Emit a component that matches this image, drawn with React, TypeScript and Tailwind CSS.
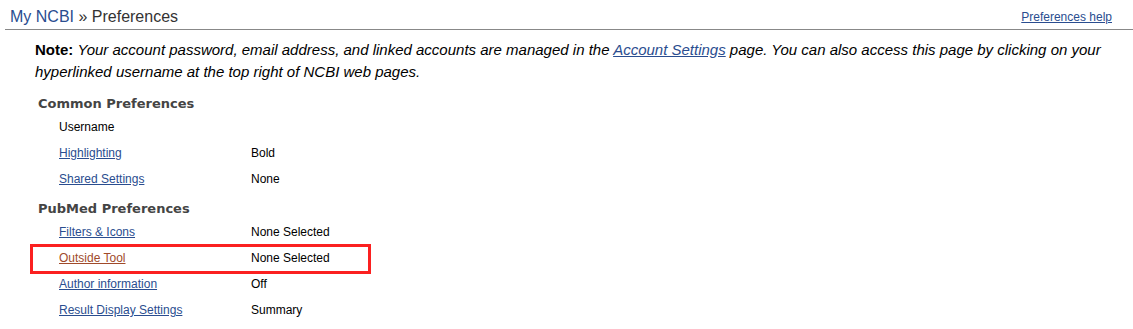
import React from 'react';

type Row = { label: string; value?: string; link?: boolean; highlight?: boolean };

const common: Row[] = [
  { label: 'Username' },
  { label: 'Highlighting', value: 'Bold', link: true },
  { label: 'Shared Settings', value: 'None', link: true },
];

const pubmed: Row[] = [
  { label: 'Filters & Icons', value: 'None Selected', link: true },
  { label: 'Outside Tool', value: 'None Selected', link: true, highlight: true },
  { label: 'Author information', value: 'Off', link: true },
  { label: 'Result Display Settings', value: 'Summary', link: true },
];

const PrefRow = ({ row }: { row: Row }) => (
  <div className="relative flex h-[26px] items-center pl-[59px]">
    {row.highlight && (
      <div className="pointer-events-none absolute left-[30px] top-[-1px] h-[30px] w-[341px] border-[3px] border-[#fb2020]" />
    )}
    <div className="w-[192px]">
      {row.link ? (
        <a href="#" className={`underline ${row.highlight ? 'text-[#a04a2a]' : 'text-[#2a4d8f]'}`}>
          {row.label}
        </a>
      ) : (
        <span className="text-black">{row.label}</span>
      )}
    </div>
    <div className="text-black">{row.value}</div>
  </div>
);

const Heading = ({ children }: { children: React.ReactNode }) => (
  <h2 className="pl-[38px] font-['DejaVu_Sans',Verdana,sans-serif] text-[13px] font-bold text-[#444]">
    {children}
  </h2>
);

export default function App() {
  return (
    <div className="h-[329px] w-[1133px] overflow-hidden bg-white font-['Liberation_Sans',Arial,sans-serif]">
      {/* Title bar */}
      <div className="ml-[5px] flex items-end justify-between border-b border-[#888] pb-[3px] pl-[5px] pr-[21px] pt-[7px]">
        <h1 className="text-[16px] leading-[19px] text-[#333]">
          <a href="#" className="text-[#2a4d8f]">My NCBI</a> » Preferences
        </h1>
        <a href="#" className="mb-[2px] text-[12px] leading-[14px] text-[#2a4d8f] underline">
          Preferences help
        </a>
      </div>

      {/* Note */}
      <p className="pl-[35px] pr-[20px] pt-[9px] text-[15px] leading-[22px] text-black">
        <b>Note:</b>{' '}
        <i>
          Your account password, email address, and linked accounts are managed in the{' '}
          <a href="#" className="text-[#2a4d8f] underline">Account Settings</a> page. You can also
          access this page by clicking on your hyperlinked username at the top right of NCBI web pages.
        </i>
      </p>

      <div className="pt-[11px] text-[12px]">
        <Heading>Common Preferences</Heading>
        <div>
          {common.map((r) => (
            <PrefRow key={r.label} row={r} />
          ))}
        </div>
        <div className="pt-[7px]">
          <Heading>PubMed Preferences</Heading>
        </div>
        <div className="pt-[1px]">
          {pubmed.map((r) => (
            <PrefRow key={r.label} row={r} />
          ))}
        </div>
      </div>
    </div>
  );
}
